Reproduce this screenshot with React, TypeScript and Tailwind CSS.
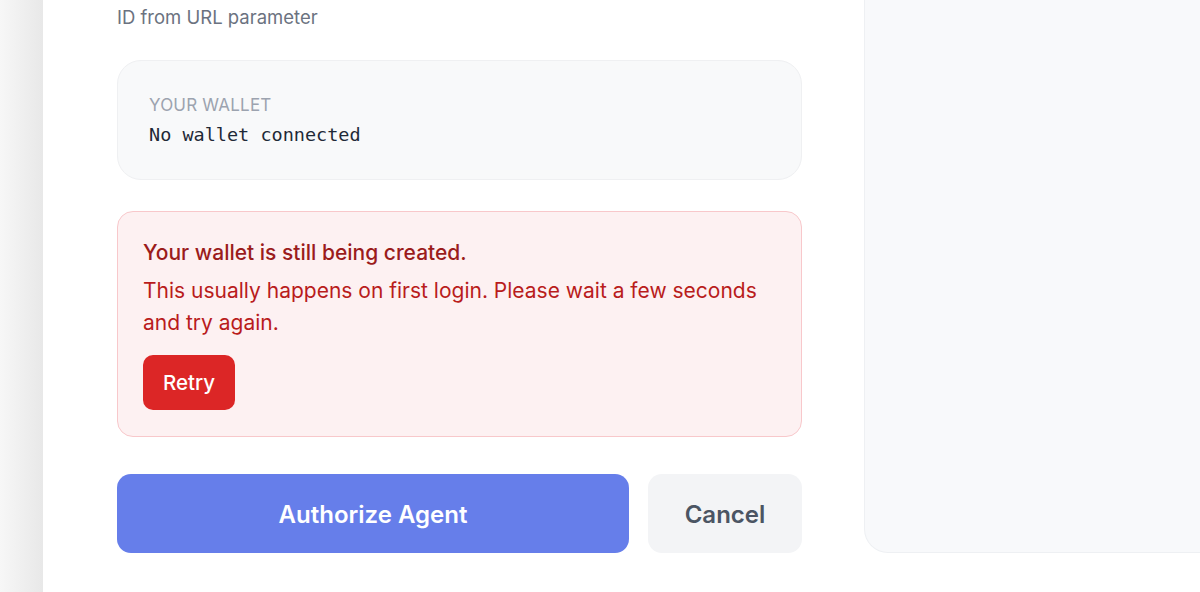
import React from "react";

export default function App() {
  return (
    <div
      className="w-[1200px] h-[592px] flex overflow-hidden bg-white"
      style={{ fontFamily: "Inter, 'Noto Sans', 'Liberation Sans', sans-serif" }}
    >
      <div className="w-[43px] h-full bg-gradient-to-r from-[#f7f7f7] to-[#e8e8e8]" />
      <div className="flex-1 h-full bg-white flex pl-[74px]">
        <div className="w-[685px] flex flex-col">
          <div className="mt-[4px] h-[26px] leading-[26px] text-[18.5px] text-[#6b7280]">ID from URL parameter</div>
          <div className="mt-[30px] h-[120px] rounded-[24px] bg-[#f8f9fa] border border-[#eff0f2] px-[31px] pt-[32px]">
            <div className="text-[17px] leading-[24px] text-[#9ca3af] uppercase tracking-[0.2px]">Your wallet</div>
            <div
              className="mt-[5px] text-[18.5px] leading-[26px] text-[#1f2937]"
              style={{ fontFamily: "'DejaVu Sans Mono', 'Liberation Mono', monospace" }}
            >
              No wallet connected
            </div>
          </div>
          <div className="mt-[31px] h-[226px] rounded-[16px] bg-[#fdf1f2] border border-[#f8c8cb] px-[25px] pt-[26px]">
            <div className="text-[21px] leading-[30px] font-medium text-[#9b1c1c]">Your wallet is still being created.</div>
            <div className="mt-[7px] w-[620px] text-[21px] leading-[32px] text-[#b91c1c]">
              This usually happens on first login. Please wait a few seconds and try again.
            </div>
            <button className="mt-[16px] h-[55px] w-[92px] rounded-[10px] bg-[#dc2626] text-white text-[20.5px] font-medium pt-[1px]">
              Retry
            </button>
          </div>
          <div className="mt-[37px] flex gap-[19px]">
            <button className="w-[512px] h-[79px] rounded-[14px] bg-[#667eea] text-white text-[24px] font-semibold pt-[3px]">
              Authorize Agent
            </button>
            <button className="w-[154px] h-[79px] rounded-[14px] bg-[#f3f4f6] text-[#4b5563] text-[24px] font-semibold pt-[3px]">
              Cancel
            </button>
          </div>
        </div>
        <div className="ml-[62px] flex-1 h-[553px] bg-[#f8f9fb] border-l border-b border-[#eef0f3] rounded-bl-[24px]" />
      </div>
    </div>
  );
}
